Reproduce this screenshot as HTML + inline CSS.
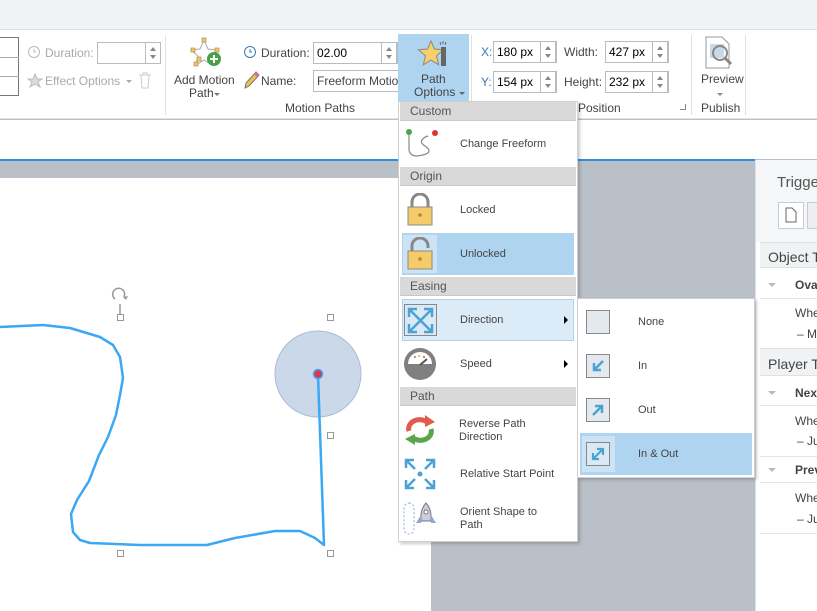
<!DOCTYPE html>
<html><head><meta charset="utf-8"><style>
*{box-sizing:border-box;margin:0;padding:0}
body{width:817px;height:611px;overflow:hidden;position:relative;font-family:"Liberation Sans",sans-serif;background:#b9c0c7;color:#444}
.a{position:absolute}
.t{position:absolute;font-size:12px;color:#444;white-space:nowrap}
.g{color:#aaa}
.box{position:absolute;background:#fff;border:1px solid #b5bcc3;font-size:12px;color:#000;padding:2px 3px;white-space:nowrap;overflow:hidden;line-height:16px}
.spin{position:absolute;border:1px solid #b5bcc3;background:#fff;width:16px}
.spin:before{content:"";position:absolute;left:4px;top:4px;border:3px solid transparent;border-bottom:4px solid #888;border-top:0}
.spin:after{content:"";position:absolute;left:4px;bottom:4px;border:3px solid transparent;border-top:4px solid #888;border-bottom:0}
.hdr{position:absolute;left:400px;width:176px;height:19px;background:#d9d9d9;border-bottom:1px solid #c8c8c8;font-size:12px;color:#555;padding:2px 0 0 10px}
.mi{position:absolute;font-size:11px;color:#444;white-space:nowrap}
.h{position:absolute;width:7px;height:7px;border:1.5px solid #999;background:#fff}
</style></head><body>
<div class="a" style="left:0;top:0;width:817px;height:30px;background:#f0f3f6;border-bottom:1px solid #dde2e6"></div>
<div class="a" style="left:0;top:30px;width:817px;height:89px;background:#fff;border-bottom:1px solid #dde2e6"></div>
<div class="a" style="left:0;top:120px;width:817px;height:39px;background:#fff"></div>
<div class="a" style="left:0;top:159px;width:755px;height:2px;background:#2f8ee0"></div>
<div class="a" style="left:0;top:37px;width:19px;height:59px;border:1px solid #777;border-left:none;background:#fff"></div>
<div class="a" style="left:0;top:57px;width:19px;height:1px;background:#aaa"></div>
<div class="a" style="left:0;top:76px;width:19px;height:1px;background:#aaa"></div>
<svg class="a" style="left:27px;top:45px" width="14" height="14"><circle cx="7" cy="7" r="5.5" fill="none" stroke="#bbb"/><path d="M7 4v3h2" stroke="#bbb" fill="none"/></svg>
<div class="t g" style="left:45px;top:46px">Duration:</div>
<div class="box" style="left:97px;top:42px;width:64px;height:22px"></div>
<div class="spin" style="left:145px;top:42px;height:22px"></div>
<svg class="a" style="left:27px;top:72px" width="16" height="16"><path d="M8 2l2 5h5l-4 3 2 5-5-3-5 3 2-5-4-3h5z" fill="#ddd" stroke="#bbb"/></svg>
<div class="t g" style="left:45px;top:74px">Effect Options</div>
<div class="a" style="left:126px;top:80px;border:3px solid transparent;border-top:3px solid #aaa"></div>
<svg class="a" style="left:138px;top:72px" width="14" height="17"><path d="M1 3h12M5 3V1h4v2M3 3l1 13h6l1-13" fill="none" stroke="#ccc"/></svg>
<div class="a" style="left:165px;top:35px;width:1px;height:80px;background:#dde2e6"></div>
<svg class="a" style="left:189px;top:37px" width="34" height="30"><path d="M15 3l4 9 9 1-7 6 2 9-8-5-8 5 2-9-7-6 9-1z" fill="none" stroke="#aaa"/><g fill="#f5c86a" stroke="#a08040" stroke-width=".6"><rect x="13" y="1" width="4" height="4"/><rect x="2" y="11" width="4" height="4"/><rect x="26" y="11" width="4" height="4"/><rect x="8" y="20" width="4" height="4"/><rect x="5" y="25" width="4" height="4"/></g><circle cx="25" cy="22" r="7" fill="#4aa04a"/><path d="M25 18v8M21 22h8" stroke="#fff" stroke-width="2"/></svg>
<div class="t" style="left:174px;top:73px">Add Motion</div>
<div class="t" style="left:189px;top:86px">Path</div>
<div class="a" style="left:214px;top:93px;border:3px solid transparent;border-top:3px solid #777"></div>
<svg class="a" style="left:243px;top:45px" width="14" height="14"><circle cx="7" cy="7" r="5.5" fill="none" stroke="#3a78b8"/><path d="M7 4v3h2" stroke="#3a78b8" fill="none"/></svg>
<div class="t" style="left:261px;top:46px">Duration:</div>
<div class="box" style="left:313px;top:42px;width:85px;height:22px">02.00</div>
<div class="spin" style="left:381px;top:42px;height:22px"></div>
<svg class="a" style="left:242px;top:70px" width="18" height="20"><path d="M3 18l1-5 10-11 3 3-10 11z" fill="#f0c050" stroke="#777"/><path d="M13 3l3 3" stroke="#e07080" stroke-width="3"/></svg>
<div class="t" style="left:261px;top:74px">Name:</div>
<div class="box" style="left:313px;top:70px;width:86px;height:22px;color:#444">Freeform Motio</div>
<div class="t" style="left:285px;top:101px">Motion Paths</div>
<div class="a" style="left:398px;top:34px;width:71px;height:68px;background:#aed4f0"></div>
<svg class="a" style="left:417px;top:39px" width="34" height="28"><path d="M14 2l3.5 8 9 .8-7 6 2.2 9-7.7-4.7-7.7 4.7 2.2-9-7-6 9-.8z" fill="#f8cf6a" stroke="#888"/><rect x="24" y="8" width="5" height="19" fill="#666"/><path d="M26 2v3M29 3l-1 3M23 3l1 3" stroke="#666"/></svg>
<div class="t" style="left:421px;top:72px">Path</div>
<div class="t" style="left:414px;top:85px">Options</div>
<div class="a" style="left:459px;top:92px;border:3px solid transparent;border-top:3px solid #666"></div>
<div class="a" style="left:471px;top:35px;width:1px;height:80px;background:#dde2e6"></div>
<div class="t" style="left:481px;top:45px;color:#3a78b8">X:</div>
<div class="box" style="left:493px;top:41px;width:64px;height:22px">180 px</div>
<div class="spin" style="left:540px;top:41px;height:22px"></div>
<div class="t" style="left:481px;top:75px;color:#3a78b8">Y:</div>
<div class="box" style="left:493px;top:71px;width:64px;height:22px">154 px</div>
<div class="spin" style="left:540px;top:71px;height:22px"></div>
<div class="t" style="left:564px;top:45px">Width:</div>
<div class="box" style="left:605px;top:41px;width:64px;height:22px">427 px</div>
<div class="spin" style="left:652px;top:41px;height:22px"></div>
<div class="t" style="left:564px;top:75px">Height:</div>
<div class="box" style="left:605px;top:71px;width:64px;height:22px">232 px</div>
<div class="spin" style="left:652px;top:71px;height:22px"></div>
<div class="t" style="left:578px;top:101px">Position</div>
<div class="a" style="left:680px;top:104px;width:6px;height:6px;border-right:1px solid #888;border-bottom:1px solid #888"></div>
<div class="a" style="left:691px;top:35px;width:1px;height:80px;background:#dde2e6"></div>
<svg class="a" style="left:703px;top:36px" width="34" height="34"><path d="M3 1h16l7 7v24H3z" fill="#fff" stroke="#999"/><rect x="7" y="8" width="14" height="14" fill="#cad8ea"/><circle cx="17" cy="17" r="7" fill="none" stroke="#888" stroke-width="2"/><path d="M22 22l6 6" stroke="#888" stroke-width="3"/></svg>
<div class="t" style="left:701px;top:72px">Preview</div>
<div class="a" style="left:717px;top:93px;border:3px solid transparent;border-top:3px solid #888"></div>
<div class="t" style="left:701px;top:101px">Publish</div>
<div class="a" style="left:745px;top:35px;width:1px;height:80px;background:#dde2e6"></div>
<div class="a" style="left:0;top:178px;width:431px;height:433px;background:#fff"></div>
<svg class="a" style="left:0;top:0" width="432" height="611">
<circle cx="318" cy="374" r="43" fill="#cbd8e9" stroke="#a9bcd6"/>
<path d="M0 327 L43 325 L70 328 L100 337 L113 345 L120 357 L123 378 L120 395 L116 415 L108 437 L99 455 L89 481 L77 500 L71 514 L73 532 L80 540 L90 543 L140 545 L207 545 L235 538 L275 531 L300 531 L315 538 L324 545 L318 375" fill="none" stroke="#3aa8f5" stroke-width="2.5" stroke-linejoin="round"/>
<circle cx="318" cy="374" r="4.5" fill="#d8384a" stroke="#3aa8f5" stroke-width="1.5"/>
<path d="M120 315 V304 M115 299 a6 6 0 1 1 9 -2" fill="none" stroke="#999" stroke-width="1.5"/><path d="M123 297 l5 -1 -2 4z" fill="#999"/>
</svg>
<div class="h" style="left:117px;top:314px"></div>
<div class="h" style="left:327px;top:314px"></div>
<div class="h" style="left:327px;top:432px"></div>
<div class="h" style="left:117px;top:550px"></div>
<div class="h" style="left:327px;top:550px"></div>
<div class="a" style="left:755px;top:160px;width:62px;height:451px;background:#fff;border-left:1px solid #dde2e6"></div>
<div class="a" style="left:756px;top:160px;width:61px;height:82px;background:#f4f6f8"></div>
<div class="t" style="left:777px;top:174px;font-size:15px;color:#555">Trigge</div>
<div class="a" style="left:778px;top:202px;width:26px;height:27px;border:1px solid #c5ccd3;background:#fff"></div>
<svg class="a" style="left:785px;top:207px" width="12" height="16"><path d="M1 1h6l4 4v10H1z" fill="none" stroke="#666"/></svg>
<div class="a" style="left:807px;top:202px;width:12px;height:27px;border:1px solid #c5ccd3;background:#eee"></div>
<div class="a" style="left:760px;top:242px;width:57px;height:26px;background:#f0f2f4;border-top:1px solid #dde2e6;border-bottom:1px solid #dde2e6"></div>
<div class="t" style="left:768px;top:249px;font-size:14px;color:#444">Object T</div>
<div class="a" style="left:768px;top:283px;border:4px solid transparent;border-top:4px solid #bbb"></div>
<div class="t" style="left:795px;top:278px;font-weight:bold">Ova</div>
<div class="a" style="left:760px;top:298px;width:57px;height:1px;background:#e3e6e9"></div>
<div class="t" style="left:795px;top:306px">Whe</div>
<div class="t" style="left:797px;top:327px">– M</div>
<div class="a" style="left:760px;top:348px;width:57px;height:28px;background:#f0f2f4;border-top:1px solid #dde2e6;border-bottom:1px solid #dde2e6"></div>
<div class="t" style="left:768px;top:356px;font-size:14px">Player T</div>
<div class="a" style="left:768px;top:391px;border:4px solid transparent;border-top:4px solid #bbb"></div>
<div class="t" style="left:795px;top:386px;font-weight:bold">Nex</div>
<div class="a" style="left:760px;top:405px;width:57px;height:1px;background:#e3e6e9"></div>
<div class="t" style="left:795px;top:414px">Whe</div>
<div class="t" style="left:797px;top:434px">– Ju</div>
<div class="a" style="left:760px;top:456px;width:57px;height:1px;background:#e3e6e9"></div>
<div class="a" style="left:768px;top:468px;border:4px solid transparent;border-top:4px solid #bbb"></div>
<div class="t" style="left:795px;top:463px;font-weight:bold">Prev</div>
<div class="a" style="left:760px;top:482px;width:57px;height:1px;background:#e3e6e9"></div>
<div class="t" style="left:795px;top:491px">Whe</div>
<div class="t" style="left:797px;top:512px">– Ju</div>
<div class="a" style="left:760px;top:533px;width:57px;height:1px;background:#e3e6e9"></div>
<div class="a" style="left:398px;top:101px;width:180px;height:441px;background:#fff;border:1px solid #d0d0d0;box-shadow:2px 2px 3px rgba(0,0,0,.2)"></div>
<div class="hdr" style="top:102px">Custom</div>
<svg class="a" style="left:405px;top:128px" width="36" height="32"><path d="M4 5v17q1 6 8 6 8-1 11-3 3-3-3-7-5-3-3-6 2-3 6-4" fill="none" stroke="#888" stroke-width="1.2"/><circle cx="4" cy="4" r="3" fill="#49a548"/><circle cx="30" cy="5" r="3" fill="#d33"/></svg>
<div class="mi" style="left:460px;top:138px">Change Freeform</div>
<div class="hdr" style="top:167px">Origin</div>
<svg class="a" style="left:405px;top:193px" width="30" height="34"><path d="M7 14V9a8 8 0 0 1 16 0v5" fill="none" stroke="#888" stroke-width="3"/><rect x="3" y="14" width="24" height="18" fill="#f6cc6a" stroke="#888"/><circle cx="15" cy="22" r="1.8" fill="#b08a30"/></svg>
<div class="mi" style="left:460px;top:204px">Locked</div>
<div class="a" style="left:402px;top:233px;width:172px;height:42px;background:#aed4f0"></div>
<div class="a" style="left:403px;top:235px;width:34px;height:38px;background:#cbe3f5"></div>
<svg class="a" style="left:405px;top:237px" width="30" height="34"><path d="M7 14V9a8 8 0 0 1 16 0v2" fill="none" stroke="#888" stroke-width="3"/><rect x="3" y="14" width="24" height="18" fill="#f6cc6a" stroke="#888"/><circle cx="15" cy="22" r="1.8" fill="#b08a30"/></svg>
<div class="mi" style="left:460px;top:248px">Unlocked</div>
<div class="hdr" style="top:277px">Easing</div>
<div class="a" style="left:402px;top:299px;width:172px;height:42px;background:#dcebf8;border:1px solid #aed4f0"></div>
<div class="a" style="left:404px;top:304px;width:33px;height:32px;border:1px solid #888;background:#dbe9f4"></div>
<svg class="a" style="left:406px;top:306px" width="29" height="29"><g stroke="#4ba3d4" stroke-width="2.5" fill="none"><path d="M3 3l23 23M26 3L3 26M3 11V3h8M26 11V3h-8M3 18v8h8M26 18v8h-8"/></g></svg>
<div class="mi" style="left:460px;top:314px">Direction</div>
<div class="a" style="left:564px;top:316px;border:4px solid transparent;border-left:4px solid #000"></div>
<svg class="a" style="left:403px;top:347px" width="34" height="34"><circle cx="17" cy="17" r="16" fill="#808080"/><path d="M5 17a12 12 0 0 1 24 0z" fill="#fff"/><path d="M17 18l7-6" stroke="#555" stroke-width="2"/><circle cx="12" cy="10" r="1" fill="#4a4"/><circle cx="16" cy="9" r="1" fill="#ea4"/><circle cx="21" cy="10" r="1" fill="#d44"/></svg>
<div class="mi" style="left:460px;top:358px">Speed</div>
<div class="a" style="left:564px;top:360px;border:4px solid transparent;border-left:4px solid #000"></div>
<div class="hdr" style="top:387px">Path</div>
<svg class="a" style="left:403px;top:413px" width="34" height="34"><path d="M6 18a11 9 0 0 1 18-9" fill="none" stroke="#e05a4e" stroke-width="5"/><path d="M22 2l10 7-10 5z" fill="#e05a4e"/><path d="M28 16a11 9 0 0 1-18 9" fill="none" stroke="#5aa54a" stroke-width="5"/><path d="M12 32L2 26l10-5z" fill="#5aa54a"/></svg>
<div class="mi" style="left:459px;top:418px">Reverse Path</div>
<div class="mi" style="left:459px;top:431px">Direction</div>
<svg class="a" style="left:403px;top:457px" width="34" height="34"><g stroke="#4ba3d4" stroke-width="2.5" fill="none"><path d="M3 3l9 9M31 3l-9 9M3 31l9-9M31 31l-9-9M3 11V3h8M31 11V3h-8M3 23v8h8M31 23v8h-8"/></g><circle cx="17" cy="17" r="2.5" fill="#4ba3d4"/></svg>
<div class="mi" style="left:460px;top:468px">Relative Start Point</div>
<svg class="a" style="left:403px;top:501px" width="34" height="34"><rect x="1" y="2" width="10" height="31" rx="5" fill="none" stroke="#8aa8d8" stroke-dasharray="2 2"/><path d="M23 2q6 6 5 18h-10q-1-12 5-18z" fill="#ccd" stroke="#777"/><circle cx="23" cy="11" r="2" fill="#fff" stroke="#777"/><path d="M18 14l-5 8h5zM28 14l5 8h-5z" fill="#8aa8d8"/></svg>
<div class="mi" style="left:460px;top:506px">Orient Shape to</div>
<div class="mi" style="left:460px;top:519px">Path</div>
<div class="a" style="left:577px;top:298px;width:178px;height:180px;background:#fff;border:1px solid #d0d0d0;box-shadow:2px 2px 3px rgba(0,0,0,.2)"></div>
<div class="a" style="left:586px;top:310px;width:24px;height:24px;border:1px solid #888;background:#e4e9ee"></div>
<div class="mi" style="left:638px;top:316px">None</div>
<div class="a" style="left:586px;top:354px;width:24px;height:24px;border:1px solid #888;background:#e4e9ee"></div>
<svg class="a" style="left:590px;top:358px" width="16" height="16"><path d="M13 3L4 12M4 5v7h7" stroke="#4ba3d4" stroke-width="2.5" fill="none"/></svg>
<div class="mi" style="left:638px;top:360px">In</div>
<div class="a" style="left:586px;top:398px;width:24px;height:24px;border:1px solid #888;background:#e4e9ee"></div>
<svg class="a" style="left:590px;top:402px" width="16" height="16"><path d="M3 13l9-9M5 4h7v7" stroke="#4ba3d4" stroke-width="2.5" fill="none"/></svg>
<div class="mi" style="left:638px;top:404px">Out</div>
<div class="a" style="left:580px;top:433px;width:172px;height:42px;background:#aed4f0"></div>
<div class="a" style="left:582px;top:436px;width:33px;height:36px;background:#cbe3f5"></div>
<div class="a" style="left:586px;top:442px;width:24px;height:24px;border:1px solid #888;background:#dbe9f4"></div>
<svg class="a" style="left:590px;top:446px" width="16" height="16"><path d="M3 13l10-10M3 7v6h6M13 9V3H7" stroke="#4ba3d4" stroke-width="2.2" fill="none"/></svg>
<div class="mi" style="left:638px;top:448px">In &amp; Out</div>
</body></html>
